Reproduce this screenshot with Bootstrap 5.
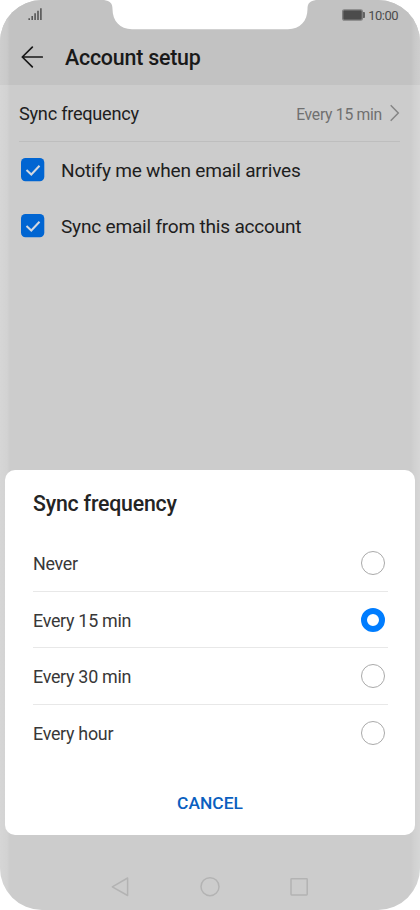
<!DOCTYPE html>
<html lang="en">
<head>
<meta charset="utf-8">
<meta name="viewport" content="width=device-width, initial-scale=1">
<title>Account setup</title>
<link href="https://cdn.jsdelivr.net/npm/bootstrap@5.3.0/dist/css/bootstrap.min.css" rel="stylesheet">
<style>
body{margin:0;background:#fff;font-family:Roboto,"Liberation Sans",sans-serif;color:#1e1e1e;overflow:hidden}
.phone{width:420px;height:910px;background:#ccc;border-radius:42px;line-height:1}
.phone::after{content:"";position:absolute;inset:0;pointer-events:none;background:linear-gradient(90deg,rgba(255,255,255,.2),rgba(255,255,255,.13) 7px,transparent 10px,transparent 411px,rgba(255,255,255,.1) 414px,rgba(255,255,255,.2))}
.notch{top:0;left:104px}
.top-area{height:85px;background:#c2c2c2}
.status{height:29px;padding:0 22px 0 28px;font-size:13px;color:#4c4c4c}
.clock{letter-spacing:-.5px;padding-top:1px}
.status .me-1{position:relative;left:1px}
.title-bar{height:56px;padding-left:21px}
.page-title{font-size:21.4px;font-weight:500;color:#191919;margin-left:22px;letter-spacing:-.22px;padding-top:2px}
.freq{height:57px;margin:0 20px 0 19px;border-bottom:1px solid #bebebe;font-size:18.2px;letter-spacing:-.27px}
.freq-label{padding-top:3px}
.freq-text{padding-top:3px}
.freq-value{font-size:15.7px}
.freq-value{color:#707070}
.option{height:56px;padding-left:21px;font-size:19.1px;letter-spacing:-.23px}
.option span{padding-top:2px}
.tick{width:24px;height:24px;margin-right:16px}
.sheet{top:470px;left:5px;width:410px;height:365px;border-radius:10px;padding:0 28px;color:#383838;z-index:2}
.sheet-title{height:65px;font-size:21.3px;font-weight:500;color:#242424;padding-top:3px;letter-spacing:-.2px}
.choice{height:56.5px;font-size:17.9px;letter-spacing:-.29px;border-bottom:1px solid #e8e8e8;margin-right:-1px;padding:1px 3px 0 0}
.choice span{padding-top:2px}
.choice:last-child{border:0}
.dot{width:24px;height:24px;border:1.3px solid #aaa;border-radius:50%}
.dot.on{border:6px solid #007dff}
.cancel{height:84px;font-size:17.4px;font-weight:500;color:#0a5fc0;padding-top:2px}
.keys{top:876px;left:110px;width:200px}
</style>
</head>
<body>
<main class="phone position-relative overflow-hidden">
  <header class="top-area">
    <div class="status d-flex align-items-center justify-content-between">
      <svg width="15" height="13" viewBox="0 0 15 13" fill="#555"><path d="M.4 10.300h1.600v1.800H.4zM3.400 8h1.600v4.100H3.400zM6.300 5.300h1.600v6.800H6.300zM9.200 2.700h1.600v9.400H9.200zM12.100.3h1.600v11.800h-1.600z"/></svg>
      <div class="d-flex align-items-center">
        <svg class="me-1" width="23" height="12" viewBox="0 0 23 12"><rect x=".7" y=".9" width="19.600" height="10.200" rx="1.500" fill="#4c4c4c" stroke="#808080" stroke-width="1.400"/><path d="M21.200 3h.8q.8 0 .8.800v4.400q0 .8-.8.800h-.8z" fill="#4c4c4c"/></svg>
        <span class="clock">10:00</span>
      </div>
    </div>
    <div class="title-bar d-flex align-items-center">
      <svg width="22" height="22" viewBox="0 0 22 22" fill="none" stroke="#191919" stroke-width="1.700" stroke-linecap="round" stroke-linejoin="round"><path d="M11.300 1.200 1.300 11l10 9.800M1.300 11h20"/></svg>
      <h1 class="page-title mb-0 lh-1">Account setup</h1>
    </div>
  </header>
  <svg class="notch position-absolute" width="212" height="30" viewBox="0 0 212 30"><path d="M0 0C6 1 8.500 3 8.500 9C8.500 21 16 29.200 28 29.200H184C196 29.200 203.500 21 203.500 9C203.500 3 206 1 212 0z" fill="#fff"/></svg>
  <div class="freq d-flex align-items-center justify-content-between">
    <span class="freq-label">Sync frequency</span>
    <span class="freq-value d-flex align-items-center"><span class="freq-text">Every 15 min</span>
      <svg class="ms-2" width="10" height="18" viewBox="0 0 10 18" fill="none" stroke="#858585" stroke-width="1.500"><path d="m.7 1.300 7.600 7.700L.7 16.700"/></svg></span>
  </div>
  <div class="option d-flex align-items-center">
    <svg class="tick" viewBox="0 0 24 24"><rect width="23.300" height="23.300" rx="4.500" fill="#0065d2"/><path d="m5.500 12 4.800 4.500 8.200-8.700" fill="none" stroke="#d2d8e0" stroke-width="2"/></svg>
    <span>Notify me when email arrives</span>
  </div>
  <div class="option d-flex align-items-center">
    <svg class="tick" viewBox="0 0 24 24"><rect width="23.300" height="23.300" rx="4.500" fill="#0065d2"/><path d="m5.500 12 4.800 4.500 8.200-8.700" fill="none" stroke="#d2d8e0" stroke-width="2"/></svg>
    <span>Sync email from this account</span>
  </div>
  <section class="sheet position-absolute bg-white">
    <h2 class="sheet-title d-flex align-items-center mb-0 lh-1">Sync frequency</h2>
    <div>
      <div class="choice d-flex align-items-center justify-content-between"><span>Never</span><i class="dot"></i></div>
      <div class="choice d-flex align-items-center justify-content-between"><span>Every 15 min</span><i class="dot on"></i></div>
      <div class="choice d-flex align-items-center justify-content-between"><span>Every 30 min</span><i class="dot"></i></div>
      <div class="choice d-flex align-items-center justify-content-between"><span>Every hour</span><i class="dot"></i></div>
    </div>
    <div class="cancel d-flex align-items-center justify-content-center"><span>CANCEL</span></div>
  </section>
  <nav class="keys position-absolute d-flex justify-content-between" aria-label="System keys">
    <svg width="20" height="21" viewBox="0 0 20 21" fill="none" stroke="#b3b3b3" stroke-width="1.500" stroke-linejoin="round"><path d="M2.300 10.800 17.600 2v17.500z"/></svg>
    <svg width="20" height="21" viewBox="0 0 20 21" fill="none" stroke="#b3b3b3" stroke-width="1.500"><circle cx="10" cy="10.700" r="9"/></svg>
    <svg width="20" height="21" viewBox="0 0 20 21" fill="none" stroke="#b3b3b3" stroke-width="1.500"><rect x="1" y="2.700" width="16.200" height="16.200" rx=".6"/></svg>
  </nav>
</main>
<script src="https://cdn.jsdelivr.net/npm/bootstrap@5.3.0/dist/js/bootstrap.bundle.min.js"></script>
</body>
</html>
